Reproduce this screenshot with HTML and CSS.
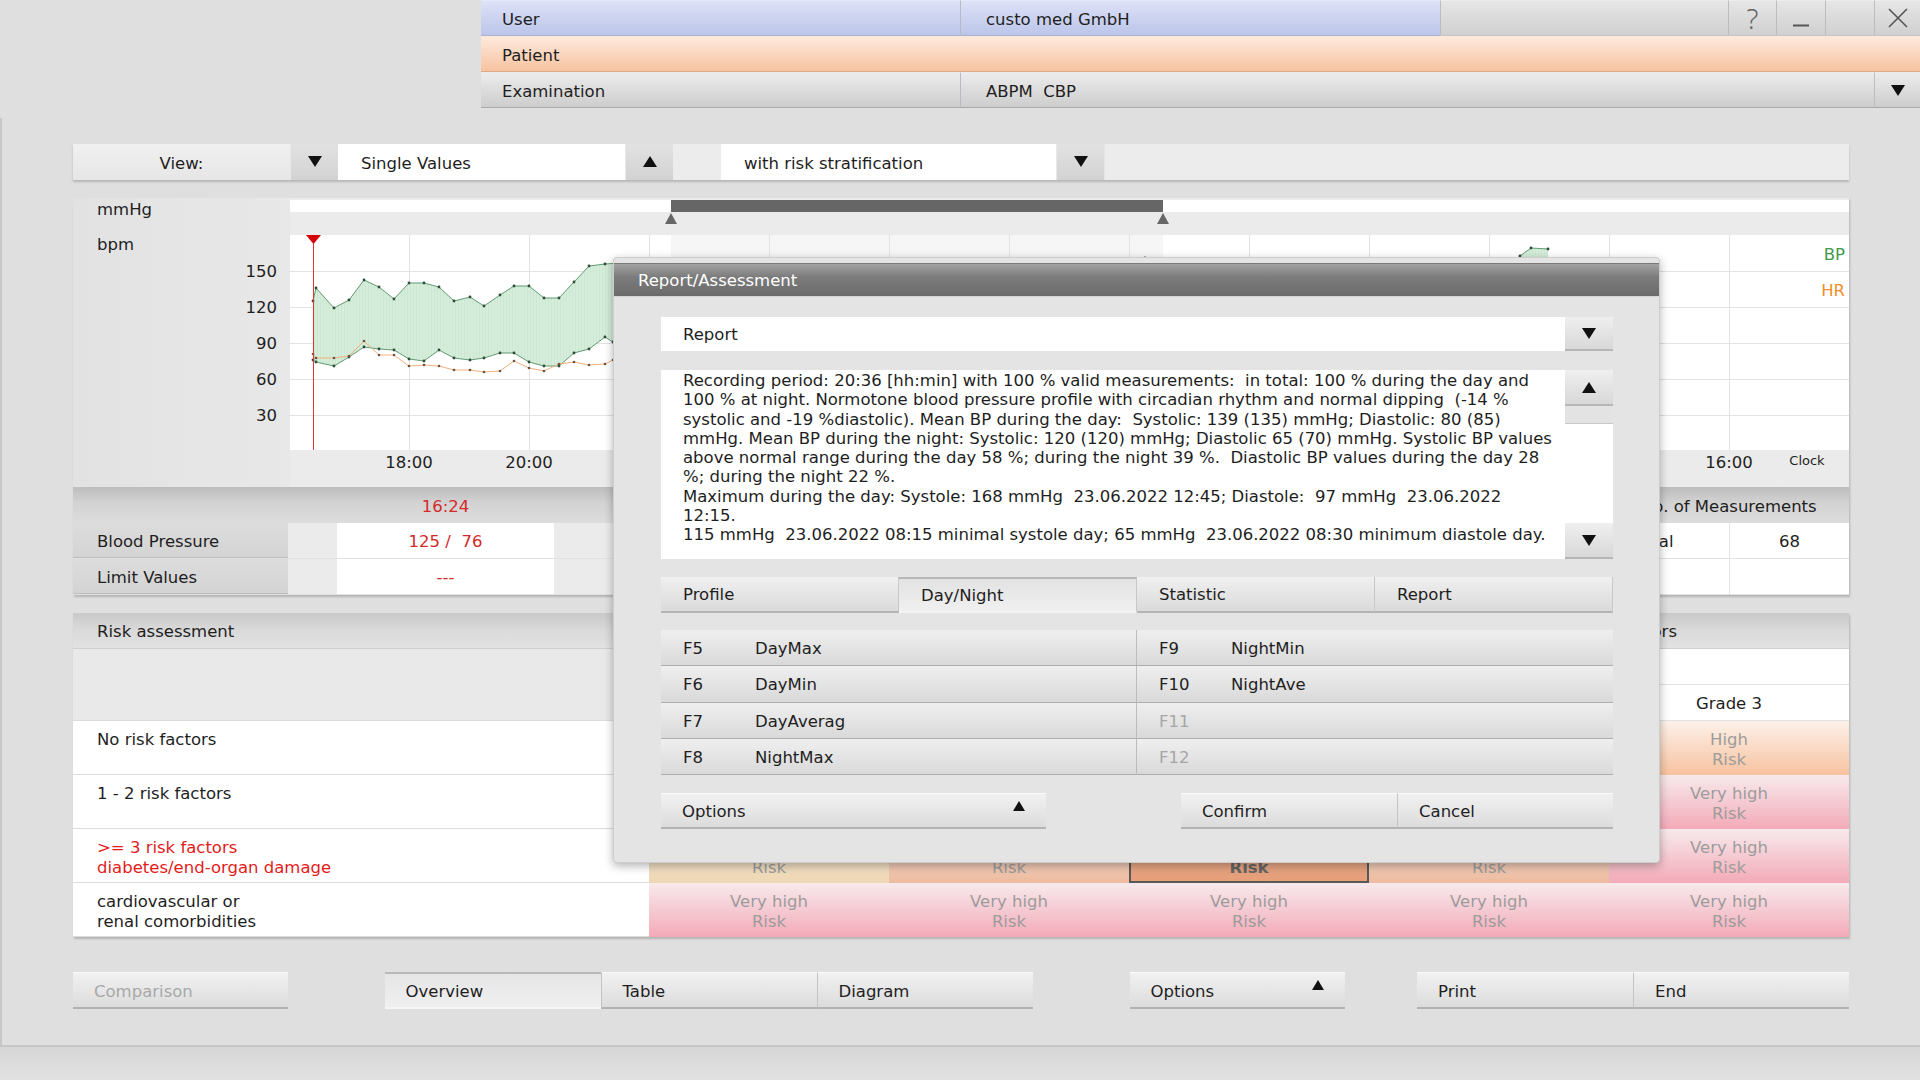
FILE: index.html
```html
<!DOCTYPE html>
<html lang="en">
<head>
    <meta charset="UTF-8">
    <meta name="viewport" content="width=device-width, initial-scale=1.0">
    <title>ABPM - Report/Assessment</title>
    <link rel="stylesheet" href="styles.css">
</head>
<body>
    <!-- header: user / patient / examination -->
    <div class="topbar">
        <div class="cell user">User</div>
        <div class="cell user value">custo med GmbH</div>
        <div class="cell sys"></div>
        <div class="cell sys icon"><span class="help">?</span></div>
        <div class="cell sys icon">
            <svg width="18" height="24" viewBox="0 0 18 24"><path d="M1 19.5H17" stroke="#555" stroke-width="2"/></svg>
        </div>
        <div class="cell sys icon"></div>
        <div class="cell sys icon">
            <svg width="20" height="20" viewBox="0 0 20 20"><path d="M1 1L19 19M19 1L1 19" stroke="#555" stroke-width="1.6" fill="none"/></svg>
        </div>
        <div class="cell patient">Patient</div>
        <div class="cell patient fill"></div>
        <div class="cell exam">Examination</div>
        <div class="cell exam value span">ABPM&nbsp; CBP</div>
        <div class="cell exam icon">
            <svg width="14" height="11" viewBox="0 0 14 11"><path d="M0 0H14L7 11Z" fill="#111"/></svg>
        </div>
    </div>

    <div class="workspace">
        <div class="toolbar">
            <div class="tb-label">View:</div>
            <div class="tb-btn"><svg width="14" height="11" viewBox="0 0 14 11"><path d="M0 0H14L7 11Z" fill="#111"/></svg></div>
            <div class="tb-field single">Single Values</div>
            <div class="tb-btn up"><svg width="14" height="11" viewBox="0 0 14 11"><path d="M0 11H14L7 0Z" fill="#111"/></svg></div>
            <div class="tb-gap"></div>
            <div class="tb-field risk">with risk stratification</div>
            <div class="tb-btn"><svg width="14" height="11" viewBox="0 0 14 11"><path d="M0 0H14L7 11Z" fill="#111"/></svg></div>
            <div class="tb-rest"></div>
        </div>

        <div class="chart-card">
            <div class="chart">
                <div class="axis">
                    <div class="units">
                        <div>mmHg</div>
                        <div class="bpm">bpm</div>
                    </div>
                    <div class="ticks">
                        <div>150</div>
                        <div>120</div>
                        <div>90</div>
                        <div>60</div>
                        <div>30</div>
                    </div>
                </div>
                <svg class="plot" width="1559" height="289" viewBox="0 0 1559 289">
                    <defs>
                        <pattern id="hatch" width="3" height="10" patternUnits="userSpaceOnUse">
                            <rect width="3" height="10" fill="#d6eddb"/>
                            <rect width="1" height="10" fill="#cbe6d1"/>
                        </pattern>
                        <marker id="dotG" viewBox="0 0 4 4" refX="2" refY="2" markerWidth="4" markerHeight="4" markerUnits="userSpaceOnUse">
                            <circle cx="2" cy="2" r="1.4" fill="#2e4c38"/>
                        </marker>
                        <marker id="dotO" viewBox="0 0 4 4" refX="2" refY="2" markerWidth="4" markerHeight="4" markerUnits="userSpaceOnUse">
                            <circle cx="2" cy="2" r="1.3" fill="#6b5443"/>
                        </marker>
                    </defs>
                    <rect width="1559" height="289" fill="#ebebeb"/>
                    <rect y="2" width="1559" height="12" fill="#fff"/>
                    <rect x="381" y="2" width="492" height="12" fill="#666"/>
                    <path d="M375 26L381 15L387 26Z M867 26L873 15L879 26Z" fill="#666"/>
                    <rect y="37" width="1559" height="215" fill="#fff"/>
                    <rect x="381" y="37" width="492" height="215" fill="#000" opacity="0.035"/>
                    <g stroke="#e3e3e3" stroke-width="1" fill="none">
                        <path d="M0 73.5H1559M0 109.5H1559M0 145.5H1559M0 181.5H1559M0 217.5H1559"/>
                        <path d="M119.5 37V252M239.5 37V252M359.5 37V252M479.5 37V252M599.5 37V252M719.5 37V252M839.5 37V252M959.5 37V252M1079.5 37V252M1199.5 37V252M1319.5 37V252M1439.5 37V252"/>
                    </g>
                    <polygon fill="url(#hatch)" points="23,103 26,90 44,110 59,102 74,82 89,89 104,101 119,85 134,85 149,89 164,103 180,99 194,108 210,97 224,88 239,88 254,100 269,100 284,84 299,68 315,66 330,65 345,72 375,80 405,78 435,95 465,90 495,105 525,112 555,108 585,115 615,110 645,118 675,112 705,116 735,108 765,114 795,104 825,96 855,60 885,84 915,78 945,90 975,74 1005,82 1035,70 1065,88 1095,76 1125,80 1155,72 1185,84 1215,70 1230,58 1241,50 1258,51 1258,140 1241,138 1230,140 1215,148 1185,156 1155,146 1125,154 1095,150 1065,158 1035,148 1005,156 975,150 945,160 915,152 885,158 855,150 825,160 795,168 765,170 735,174 705,176 675,182 645,178 615,180 585,176 555,178 525,175 495,172 465,170 435,165 405,160 375,158 345,150 323,144 315,139 299,151 284,155 269,168 254,168 239,164 224,155 210,155 194,160 180,162 164,160 149,152 134,163 119,161 104,152 89,151 74,149 59,159 44,168 26,164 23,162"/>
                    <polyline class="bp-line" points="23,103 26,90 44,110 59,102 74,82 89,89 104,101 119,85 134,85 149,89 164,103 180,99 194,108 210,97 224,88 239,88 254,100 269,100 284,84 299,68 315,66 330,65 345,72 375,80 405,78 435,95 465,90 495,105 525,112 555,108 585,115 615,110 645,118 675,112 705,116 735,108 765,114 795,104 825,96 855,60 885,84 915,78 945,90 975,74 1005,82 1035,70 1065,88 1095,76 1125,80 1155,72 1185,84 1215,70 1230,58 1241,50 1258,51"/>
                    <polyline class="bp-line" points="23,162 26,164 44,168 59,159 74,149 89,151 104,152 119,161 134,163 149,152 164,160 180,162 194,160 210,155 224,155 239,164 254,168 269,168 284,155 299,151 315,139 323,144 345,150 375,158 405,160 435,165 465,170 495,172 525,175 555,178 585,176 615,180 645,178 675,182 705,176 735,174 765,170 795,168 825,160 855,150 885,158 915,152 945,160 975,150 1005,156 1035,148 1065,158 1095,150 1125,154 1155,146 1185,156 1215,148 1230,140 1241,138 1258,140"/>
                    <polyline class="hr-line" points="23,156 26,160 44,160 59,158 74,143 89,157 104,157 119,168 134,167 149,168 164,172 180,172 194,174 210,173 224,163 239,170 254,173 269,166 284,164 299,167 315,166 323,162 345,170 375,176 405,180 435,186 465,190 495,192 525,194 555,190 585,192 615,188 645,190 675,186 705,184 735,178 765,176 795,170 825,168 855,162 885,166 915,164 945,168 975,160 1005,166 1035,162 1065,168 1095,160 1125,164 1155,158 1185,166 1215,160 1258,158"/>
                    <path d="M23.5 37V252" stroke="#e23636" stroke-width="1"/>
                    <path d="M16 37H31L23.5 46Z" fill="#d70000"/>
                    <text class="legend bp" x="1555" y="62">BP</text>
                    <text class="legend hr" x="1555" y="98">HR</text>
                    <g class="times">
                        <text x="119" y="270">18:00</text>
                        <text x="239" y="270">20:00</text>
                        <text x="1439" y="270">16:00</text>
                    </g>
                    <text class="clock" x="1517" y="267">Clock</text>
                </svg>
            </div>

            <div class="stats">
                <div class="stats-row head">
                    <div class="st-cell span2"></div>
                    <div class="st-cell center red">16:24</div>
                    <div class="st-cell"></div>
                    <div class="st-cell span2 pad head-pad">No. of Measurements</div>
                </div>
                <div class="stats-row">
                    <div class="st-cell label">Blood Pressure</div>
                    <div class="st-cell spacer"></div>
                    <div class="st-cell center red white">125 /&nbsp; 76</div>
                    <div class="st-cell spacer"></div>
                    <div class="st-cell white pad">Total</div>
                    <div class="st-cell white center divider">68</div>
                </div>
                <div class="stats-row">
                    <div class="st-cell label">Limit Values</div>
                    <div class="st-cell spacer"></div>
                    <div class="st-cell center red white">---</div>
                    <div class="st-cell spacer"></div>
                    <div class="st-cell white pad"></div>
                    <div class="st-cell white divider"></div>
                </div>
            </div>
        </div>

        <div class="risk-card">
            <div class="risk-head">
                <span>Risk assessment</span>
                <span class="risk-head-right">Risk factors</span>
            </div>
            <div class="risk-grid">
                <div class="rk-corner"></div>
                <div class="rk-top"></div>
                <div class="rk-top"></div>
                <div class="rk-top"></div>
                <div class="rk-top"></div>
                <div class="rk-top"></div>
                <div class="rk-top"></div>
                <div class="rk-top"></div>
                <div class="rk-top"></div>
                <div class="rk-top"></div>
                <div class="rk-top">Grade 3</div>

                <div class="rk-label">No risk factors</div>
                <div class="rk-cell green"></div>
                <div class="rk-cell green"></div>
                <div class="rk-cell tan"></div>
                <div class="rk-cell salmon"></div>
                <div class="rk-cell peach">High<br>Risk</div>

                <div class="rk-label">1 - 2 risk factors</div>
                <div class="rk-cell tan"></div>
                <div class="rk-cell tan"></div>
                <div class="rk-cell salmon"></div>
                <div class="rk-cell salmon"></div>
                <div class="rk-cell pink">Very high<br>Risk</div>

                <div class="rk-label red">&gt;= 3 risk factors<br>diabetes/end-organ damage</div>
                <div class="rk-cell tan low">Risk</div>
                <div class="rk-cell salmon low">Risk</div>
                <div class="rk-cell selected low">Risk</div>
                <div class="rk-cell salmon low">Risk</div>
                <div class="rk-cell pink">Very high<br>Risk</div>

                <div class="rk-label">cardiovascular or<br>renal comorbidities</div>
                <div class="rk-cell pink">Very high<br>Risk</div>
                <div class="rk-cell pink">Very high<br>Risk</div>
                <div class="rk-cell pink">Very high<br>Risk</div>
                <div class="rk-cell pink">Very high<br>Risk</div>
                <div class="rk-cell pink">Very high<br>Risk</div>
            </div>
        </div>

        <div class="bottom-bar">
            <div class="btn disabled">Comparison</div>
            <div class="btn-group view-group">
                <div class="btn pressed">Overview</div>
                <div class="btn">Table</div>
                <div class="btn">Diagram</div>
            </div>
            <div class="btn options">Options
                <svg class="up-mark" width="12" height="10" viewBox="0 0 12 10"><path d="M0 10H12L6 0Z" fill="#111"/></svg>
            </div>
            <div class="btn-group end-group">
                <div class="btn">Print</div>
                <div class="btn">End</div>
            </div>
        </div>
    </div>
    <div class="statusbar"></div>

    <!-- modal dialog -->
    <div class="dialog">
        <div class="dlg-title">Report/Assessment</div>
        <div class="dlg-body">
            <div class="select">
                <span>Report</span>
                <div class="sel-btn"><svg width="14" height="11" viewBox="0 0 14 11"><path d="M0 0H14L7 11Z" fill="#111"/></svg></div>
            </div>
            <div class="textbox">
<div class="report-text">Recording period: 20:36 [hh:min] with 100 % valid measurements:  in total: 100 % during the day and
100 % at night. Normotone blood pressure profile with circadian rhythm and normal dipping  (-14 %
systolic and -19 %diastolic). Mean BP during the day:  Systolic: 139 (135) mmHg; Diastolic: 80 (85)
mmHg. Mean BP during the night: Systolic: 120 (120) mmHg; Diastolic 65 (70) mmHg. Systolic BP values
above normal range during the day 58 %; during the night 39 %.  Diastolic BP values during the day 28
%; during the night 22 %.
Maximum during the day: Systole: 168 mmHg  23.06.2022 12:45; Diastole:  97 mmHg  23.06.2022
12:15.
115 mmHg  23.06.2022 08:15 minimal systole day; 65 mmHg  23.06.2022 08:30 minimum diastole day.</div>
                <div class="scroll">
                    <div class="sc-btn"><svg width="14" height="11" viewBox="0 0 14 11"><path d="M0 11H14L7 0Z" fill="#111"/></svg></div>
                    <div class="sc-thumb"></div>
                    <div class="sc-track"></div>
                    <div class="sc-btn"><svg width="14" height="11" viewBox="0 0 14 11"><path d="M0 0H14L7 11Z" fill="#111"/></svg></div>
                </div>
            </div>
            <div class="tabs">
                <div class="tab">Profile</div>
                <div class="tab active">Day/Night</div>
                <div class="tab">Statistic</div>
                <div class="tab">Report</div>
            </div>
            <div class="fkeys">
                <div class="fkey"><span class="fk">F5</span>DayMax</div>
                <div class="fkey"><span class="fk">F9</span>NightMin</div>
                <div class="fkey"><span class="fk">F6</span>DayMin</div>
                <div class="fkey"><span class="fk">F10</span>NightAve</div>
                <div class="fkey"><span class="fk">F7</span>DayAverag</div>
                <div class="fkey off"><span class="fk">F11</span></div>
                <div class="fkey"><span class="fk">F8</span>NightMax</div>
                <div class="fkey off"><span class="fk">F12</span></div>
            </div>
            <div class="dlg-actions">
                <div class="btn dlg-options">Options
                    <svg class="up-mark" width="12" height="10" viewBox="0 0 12 10"><path d="M0 10H12L6 0Z" fill="#111"/></svg>
                </div>
                <div class="btn-group confirm-group">
                    <div class="btn">Confirm</div>
                    <div class="btn">Cancel</div>
                </div>
            </div>
        </div>
    </div>
</body>
</html>
```

FILE: styles.css
```css
* {
    margin: 0;
    padding: 0;
    box-sizing: border-box;
}

body {
    font-family: "DejaVu Sans", sans-serif;
    font-size: 16.5px;
    color: #1e1e1e;
    background: #dfdfdf;
    width: 1920px;
    height: 1080px;
    overflow: hidden;
    position: relative;
}

/* ---------- top header ---------- */
.topbar {
    margin-left: 481px;
    display: grid;
    grid-template-columns: 479px 480px 288px 48px 49px 49px 46px;
    grid-template-rows: 36px 36px 36px;
}

.cell {
    display: flex;
    align-items: center;
    padding-left: 21px;
    padding-top: 2px;
    border-bottom: 1px solid #c4c4c4;
    border-top: 1px solid rgba(255, 255, 255, 0.6);
}

.cell.value {
    padding-left: 25px;
    border-left: 1px solid #b9b9c9;
}

.user {
    background: linear-gradient(#dde2f7, #bcc5ea);
    border-bottom-color: #a9b1cf;
}

.patient {
    background: linear-gradient(#fde9dc, #f7c3a0);
    border-bottom-color: #dca888;
}

.patient.fill {
    grid-column: 2 / -1;
}

.exam {
    background: linear-gradient(#ececec, #cdcdcd);
    border-bottom-color: #a9a9a9;
}

.exam.span {
    grid-column: 2 / 7;
}

.sys {
    background: linear-gradient(#e6e6e6, #d0d0d0);
    border-left: 1px solid #bdbdbd;
}

.icon {
    padding-left: 0;
    padding-top: 0;
    justify-content: center;
    border-left: 1px solid #bdbdbd;
}

.help {
    font-family: "Noto Sans", sans-serif;
    font-weight: 300;
    font-size: 28px;
    line-height: 32px;
    color: #666;
}

/* ---------- workspace ---------- */
.workspace {
    margin-top: 10px;
    height: 927px;
    border-left: 2px solid #c7c7c7;
    padding: 26px 0 0 71px;
}

.statusbar {
    height: 35px;
    border-top: 2px solid #c6c6c6;
    background: linear-gradient(#d6d6d6, #e2e2e2);
}

.toolbar {
    width: 1776px;
    height: 36px;
    display: flex;
    background: #ececec;
    box-shadow: 0 2px 2px rgba(0, 0, 0, 0.18);
}

.tb-label {
    width: 217px;
    display: flex;
    align-items: center;
    justify-content: center;
    padding-top: 2px;
    background: linear-gradient(#f0f0f0, #e6e6e6);
}

.tb-btn {
    width: 48px;
    display: flex;
    align-items: center;
    justify-content: center;
    background: linear-gradient(#e2e2e2, #d2d2d2);
    border-left: 1px solid #e8e8e8;
}

.tb-btn svg {
    margin-top: -2px;
}

.tb-field {
    display: flex;
    align-items: center;
    padding-top: 2px;
    background: #fff;
    padding-left: 23px;
}

.tb-field.single {
    width: 287px;
}

.tb-field.risk {
    width: 335px;
}

.tb-gap {
    width: 48px;
}

.tb-rest {
    flex: 1;
    border-left: 1px solid #e4e4e4;
}

/* ---------- chart ---------- */
.chart-card {
    margin-top: 18px;
    width: 1776px;
    box-shadow: 1px 2px 2px rgba(0, 0, 0, 0.2);
}

.chart {
    display: flex;
    height: 289px;
}

.axis {
    width: 217px;
    display: flex;
    justify-content: space-between;
    background: linear-gradient(to right, #e2e2e2, #e8e8e8);
}

.units {
    padding-left: 24px;
    padding-top: 1px;
    line-height: 22px;
}

.units .bpm {
    margin-top: 13px;
}

.ticks {
    padding-top: 56px;
    padding-right: 13px;
    text-align: right;
}

.ticks div {
    height: 36px;
    line-height: 36px;
}

.plot {
    display: block;
}

.bp-line {
    fill: none;
    stroke: #5f9c72;
    stroke-width: 1;
    marker-start: url(#dotG);
    marker-mid: url(#dotG);
    marker-end: url(#dotG);
}

.hr-line {
    fill: none;
    stroke: #f2b07a;
    stroke-width: 1;
    marker-start: url(#dotO);
    marker-mid: url(#dotO);
    marker-end: url(#dotO);
}

.legend {
    font-size: 16.5px;
    text-anchor: end;
}

.legend.bp {
    fill: #3f9a4a;
}

.legend.hr {
    fill: #f0902c;
}

.times text {
    font-size: 16.5px;
    text-anchor: middle;
    fill: #1e1e1e;
}

.clock {
    font-size: 13px;
    text-anchor: middle;
    fill: #1e1e1e;
}

/* ---------- stats rows ---------- */
.stats-row {
    display: grid;
    grid-template-columns: 215px 49px 217px 1fr 116px 120px;
    height: 36px;
    border-bottom: 1px solid #e2e2e2;
}

.stats-row.head {
    background: linear-gradient(#bdbdbd, #d3d3d3 45%, #dddddd);
    border-bottom: none;
}

.st-cell {
    display: flex;
    align-items: center;
    padding-top: 2px;
}

.st-cell.span2 {
    grid-column: span 2;
}

.st-cell.center {
    justify-content: center;
}

.st-cell.pad {
    padding-left: 22px;
}

.st-cell.head-pad {
    padding-left: 28px;
}

.st-cell.red {
    color: #d42a2a;
}

.st-cell.white {
    background: #fff;
}

.st-cell.spacer {
    background: #ebebeb;
}

.st-cell.divider {
    border-left: 1px solid #e4e4e4;
}

.st-cell.label {
    padding-left: 24px;
    background: linear-gradient(#dcdcdc, #d4d4d4);
    border-bottom: 1px solid #bcbcbc;
}

/* ---------- risk table ---------- */
.risk-card {
    margin-top: 18px;
    width: 1776px;
    background: #fff;
    box-shadow: 1px 2px 2px rgba(0, 0, 0, 0.2);
}

.risk-head {
    height: 36px;
    display: flex;
    align-items: center;
    justify-content: space-between;
    padding: 2px 172px 0 24px;
    background: linear-gradient(#c9c9c9, #dadada 50%, #e2e2e2);
    border-bottom: 1px solid #cfcfcf;
}

.risk-grid {
    display: grid;
    grid-template-columns: 576px repeat(5, 240px);
    grid-template-rows: 36px 36px repeat(4, 54px);
}

.rk-corner {
    grid-row: span 2;
    background: #e9e9e9;
    border-bottom: 1px solid #dcdcdc;
}

.rk-top {
    display: flex;
    align-items: center;
    justify-content: center;
    padding-top: 2px;
    border-bottom: 1px solid #e2e2e2;
}

.rk-label {
    padding: 9px 0 0 24px;
    line-height: 20px;
    border-bottom: 1px solid #dcdcdc;
}

.rk-label.red {
    color: #e31b1b;
}

.rk-cell {
    padding-top: 9px;
    line-height: 20px;
    text-align: center;
    color: #9c9c9c;
}

.rk-cell.low {
    padding-top: 29px;
}

.rk-cell.pink {
    background: linear-gradient(#f7eaec, #f3aab8);
}

.rk-cell.peach {
    background: linear-gradient(#fdf1e9, #f7c29f);
}

.rk-cell.tan {
    background: linear-gradient(#fbf2e6, #eed6b2);
}

.rk-cell.salmon {
    background: linear-gradient(#f9e8df, #edbb9f);
}

.rk-cell.green {
    background: linear-gradient(#f1f8ec, #cfe6c2);
}

.rk-cell.selected {
    background: linear-gradient(#ebb496, #e59e78);
    border: 2px solid #595959;
    padding-top: 27px;
    color: #666;
    font-weight: bold;
}

/* ---------- buttons ---------- */
.btn {
    position: relative;
    display: flex;
    align-items: center;
    padding-left: 21px;
    padding-top: 2px;
    height: 37px;
    background: linear-gradient(#f1f1f1, #dcdcdc);
    border-top: 1px solid #fafafa;
    border-bottom: 2px solid #b3b3b3;
}

.btn.disabled {
    color: #a8a8a8;
}

.btn.pressed {
    background: linear-gradient(#e6e6e6, #efefef);
    border-top: 2px solid #b8b8b8;
    border-bottom: 2px solid #f6f6f6;
}

.btn-group {
    display: flex;
}

.btn-group .btn + .btn {
    border-left: 1px solid #c4c4c4;
}

.up-mark {
    position: absolute;
    top: 7px;
    right: 21px;
}

.bottom-bar {
    margin-top: 35px;
    width: 1776px;
    display: flex;
}

.bottom-bar > .btn.disabled {
    width: 215px;
}

.view-group {
    margin-left: 97px;
}

.view-group .btn {
    width: 216px;
}

.bottom-bar .options {
    width: 216px;
    margin-left: 97px;
}

.end-group {
    margin-left: 72px;
}

.end-group .btn {
    width: 216px;
}

/* ---------- dialog ---------- */
.dialog {
    position: absolute;
    left: 613px;
    top: 257px;
    width: 1047px;
    height: 606px;
    padding-top: 5px;
    background: #e4e4e4;
    border: 1px solid #cdcdcd;
    border-radius: 4px;
    box-shadow: 0 3px 10px rgba(0, 0, 0, 0.3);
}

.dlg-title {
    height: 34px;
    display: flex;
    align-items: center;
    padding-left: 24px;
    color: #fff;
    background: linear-gradient(#a3a3a3, #7c7c7c 40%, #6b6b6b);
    border-top: 1px solid #7a7a7a;
    border-bottom: 1px solid #d4d4d4;
}

.dlg-body {
    padding: 20px 46px 0 47px;
}

.select {
    height: 34px;
    display: flex;
    background: #fff;
}

.select span {
    flex: 1;
    display: flex;
    align-items: center;
    padding-left: 22px;
}

.sel-btn,
.sc-btn {
    width: 48px;
    display: flex;
    align-items: center;
    justify-content: center;
    background: linear-gradient(#efefef, #d8d8d8);
    border-bottom: 2px solid #b6b6b6;
}

.textbox {
    margin-top: 19px;
    height: 189px;
    display: flex;
    background: #fff;
}

.report-text {
    flex: 1;
    white-space: pre;
    padding: 1px 0 0 22px;
    line-height: 19.25px;
    overflow: hidden;
}

.scroll {
    width: 48px;
    display: flex;
    flex-direction: column;
}

.scroll .sc-btn {
    height: 36px;
}

.sc-thumb {
    height: 18px;
    background: #e3e3e3;
    border-bottom: 1px solid #c9c9c9;
}

.sc-track {
    flex: 1;
    background: #fff;
}

.tabs {
    margin-top: 18px;
    display: flex;
}

.tab {
    flex: 1;
    height: 36px;
    display: flex;
    align-items: center;
    padding-left: 22px;
    background: linear-gradient(#f0f0f0, #dadada);
    border-bottom: 2px solid #b5b5b5;
    border-right: 1px solid #c8c8c8;
}

.tab.active {
    background: linear-gradient(#e2e2e2, #f0f0f0);
    border-top: 2px solid #b7b7b7;
    border-bottom: 2px solid #f2f2f2;
}

.fkeys {
    margin-top: 17px;
    display: grid;
    grid-template-columns: 1fr 1fr;
    grid-auto-rows: 36.25px;
}

.fkey {
    display: flex;
    align-items: center;
    padding-left: 22px;
    padding-top: 2px;
    background: linear-gradient(#efefef, #d9d9d9);
    border-bottom: 1px solid #adadad;
}

.fkey:nth-child(odd) {
    border-right: 1px solid #bcbcbc;
}

.fk {
    width: 72px;
}

.fkey.off .fk {
    color: #a6a6a6;
}

.dlg-actions {
    margin-top: 18px;
    display: flex;
    justify-content: space-between;
}

.dlg-options {
    width: 385px;
    height: 36px;
}

.confirm-group .btn {
    height: 36px;
    width: 216px;
}
```
